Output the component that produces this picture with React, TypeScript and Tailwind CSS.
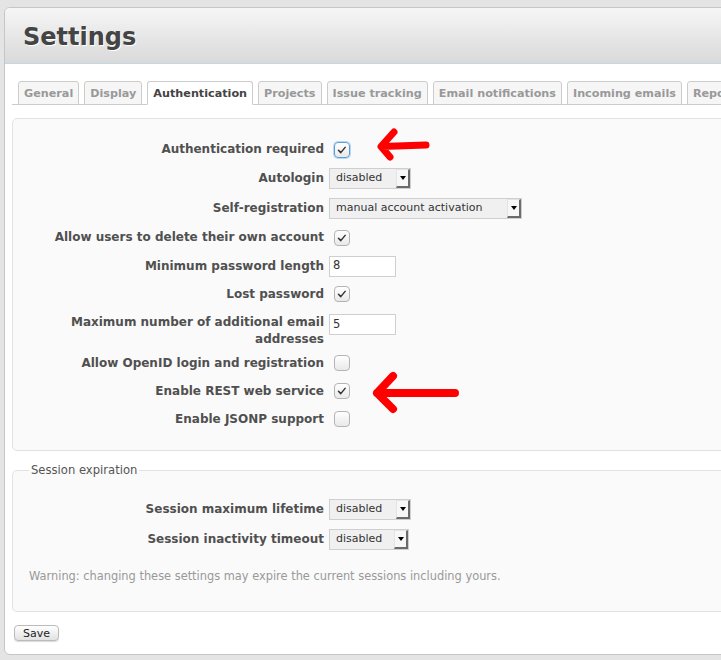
import React from 'react'

const tabs = ['General', 'Display', 'Authentication', 'Projects', 'Issue tracking', 'Email notifications', 'Incoming emails', 'Repositories']

const Check = () => (
  <svg viewBox="0 0 16 16" className="h-[14px] w-[14px]">
    <path d="M4 8.3l2.6 2.7 5-6" fill="none" stroke="#333" strokeWidth="1.7" strokeLinecap="round" strokeLinejoin="round" />
  </svg>
)

const Checkbox = ({ checked, focused }: { checked?: boolean; focused?: boolean }) => (
  <div
    className={
      'ml-[5px] flex h-[16px] w-[16px] items-center justify-center rounded-[4px] border bg-gradient-to-b from-white to-[#e9e9e9] ' +
      (focused ? 'border-[#5c9fd8] shadow-[0_0_0_1px_#b9d7f1]' : 'border-[#b4b4b4]')
    }
  >
    {checked && <Check />}
  </div>
)

const Select = ({ value, width }: { value: string; width: string }) => (
  <div className={'flex h-[21px] items-center border border-[#cfcfcf] bg-[#f0f0f0] ' + width}>
    <span className="pl-[6px] text-[11px] text-[#333]">{value}</span>
    <div className="ml-auto mr-0 flex h-[19px] w-[14px] items-center justify-center border-l border-t border-[#e4e4e4] border-r-2 border-b-2 border-r-[#6b6b6b] border-b-[#6b6b6b] bg-[#f7f7f7]">
      <div className="h-0 w-0 border-x-[3px] border-t-[4px] border-x-transparent border-t-black" />
    </div>
  </div>
)

const TextInput = ({ value }: { value: string }) => (
  <div className="flex h-[21px] w-[67px] items-center border border-[#cfcfcf] bg-white pl-[3px] text-[11.5px] text-[#333]">{value}</div>
)

const Row = ({ label, h, labelW = 'w-[300px]', top, children }: { label: string; h: string; labelW?: string; top?: boolean; children: React.ReactNode }) => (
  <div className={'flex ' + h + (top ? ' items-start' : ' items-center')}>
    <div className={labelW + ' text-right text-[12px] font-bold leading-[17px] text-[#505050]'}>{label}</div>
    <div className="ml-[5px] flex items-center">{children}</div>
  </div>
)

export default function App() {
  return (
    <div className="relative h-[660px] w-[721px] overflow-hidden bg-[#e4e4e4] pl-[4px] pt-[7px] font-['DejaVu_Sans',Verdana,sans-serif]">
      <div className="w-[760px] overflow-hidden rounded-l-[6px] border border-[#c6c6c6] bg-white">
        <div className="h-[56px] border-b border-[#c3d6e2] bg-gradient-to-b from-[#f6f6f6] to-[#d9d9d9] pl-[18px] pt-[15px]">
          <h2 className="text-[24px] font-bold leading-[28px] text-[#444] [text-shadow:1px_1px_0_#fff]">Settings</h2>
        </div>

        <div className="px-[7px] pb-[10px] pt-[17px]">
          <ul className="flex h-[24px] items-end gap-[5px] border-b border-[#cccccc] pl-[6px]">
            {tabs.map(t => (
              <li
                key={t}
                className={
                  '-mb-px h-[24px] shrink-0 rounded-t-[3px] border px-[5px] pt-[1px] text-[11.2px] font-bold leading-[22px] ' +
                  (t === 'Authentication'
                    ? 'border-[#cccccc] border-b-white bg-white text-[#444]'
                    : 'border-[#cccccc] bg-[#f6f6f6] text-[#999]')
                }
              >
                {t}
              </li>
            ))}
          </ul>

          <div className="mt-[13px] rounded-[5px] border border-[#e2e2e2] bg-[#fafafa] pb-[17px] pl-[11px] pt-[16px]">
            <Row label="Authentication required" h="h-[29px]"><Checkbox checked focused /></Row>
            <Row label="Autologin" h="h-[29px]"><Select value="disabled" width="w-[82px]" /></Row>
            <Row label="Self-registration" h="h-[30px]"><Select value="manual account activation" width="w-[193px]" /></Row>
            <Row label="Allow users to delete their own account" h="h-[29px]"><Checkbox checked /></Row>
            <Row label="Minimum password length" h="h-[28px]"><TextInput value="8" /></Row>
            <Row label="Lost password" h="h-[28px]"><Checkbox checked /></Row>
            <div className="pt-[6px]">
              <Row label="Maximum number of additional email addresses" h="h-[35px]" top><TextInput value="5" /></Row>
            </div>
            <Row label="Allow OpenID login and registration" h="h-[28px]"><Checkbox /></Row>
            <Row label="Enable REST web service" h="h-[28px]"><Checkbox checked /></Row>
            <Row label="Enable JSONP support" h="h-[28px]"><Checkbox /></Row>
          </div>

          <fieldset className="mt-[11px] rounded-[5px] border border-[#e2e2e2] bg-[#fafafa] pb-[27px] pl-[16px]">
            <legend className="px-[2px] text-[11.6px] leading-[16px] text-[#555]">Session expiration</legend>
            <div className="mt-[17px]">
              <Row label="Session maximum lifetime" h="h-[29px]" labelW="w-[295px]"><Select value="disabled" width="w-[82px]" /></Row>
              <Row label="Session inactivity timeout" h="h-[30px]" labelW="w-[295px]"><Select value="disabled" width="w-[80px]" /></Row>
            </div>
            <p className="mt-[14px] text-[11.4px] leading-[16px] text-[#999]">
              Warning: changing these settings may expire the current sessions including yours.
            </p>
          </fieldset>

          <button className="ml-[2px] mt-[13px] h-[16px] rounded-[4px] border border-[#bbbbbb] bg-gradient-to-b from-white to-[#e2e2e2] px-[8px] text-[11px] leading-[13px] text-[#222] shadow-[0_1px_1px_rgba(0,0,0,0.15)]">
            Save
          </button>
        </div>
      </div>

      <svg className="pointer-events-none absolute left-0 top-0" width="721" height="660">
        <g fill="none" stroke="#ff0000" strokeLinecap="round" strokeLinejoin="round">
          <path d="M426 145L382 146.5M394 132L381 146.5L390 157" strokeWidth="7" />
          <path d="M455 393L377 393M393 376L377 393L393 409" strokeWidth="8" />
        </g>
      </svg>
    </div>
  )
}
